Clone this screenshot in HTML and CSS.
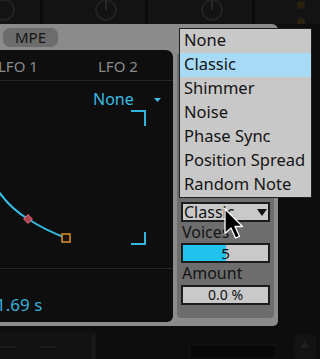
FILE: index.html
```html
<!DOCTYPE html>
<html lang="en">

<head>
    <meta charset="utf-8">
    <title>Drift - Voice Mode</title>
    <link rel="stylesheet" href="styles.css">
</head>

<body>
    <!-- strip of the device above, mostly out of view -->
    <div class="top-strip">
        <svg width="320" height="24" viewBox="0 0 320 24">
            <rect x="40" y="0" width="3" height="24" fill="#0a0a0a"/>
            <rect x="145" y="0" width="3" height="24" fill="#0a0a0a"/>
            <rect x="252" y="0" width="3" height="24" fill="#0a0a0a"/>
            <circle cx="4" cy="10" r="10" fill="none" stroke="#222" stroke-width="2"/>
            <circle cx="106" cy="10" r="10" fill="none" stroke="#222" stroke-width="2"/>
            <line x1="106" y1="0" x2="106" y2="10" stroke="#262626" stroke-width="2"/>
            <circle cx="212" cy="10" r="10" fill="none" stroke="#222" stroke-width="2"/>
            <line x1="212" y1="0" x2="212" y2="10" stroke="#262626" stroke-width="2"/>
            <circle cx="301" cy="5" r="4" fill="#2a2110"/>
            <circle cx="301" cy="22" r="4" fill="#2a2110"/>
        </svg>
    </div>

    <div class="device">
        <div class="device-head">
            <span class="mpe">MPE</span>
        </div>
        <div class="device-body">
            <div class="lfo-panel">
                <div class="lfo-tabs">
                    <span>LFO 1</span>
                    <span>LFO 2</span>
                </div>
                <div class="lfo-graph">
                    <svg width="193" height="187" viewBox="0 0 193 187">
                        <path d="M8 93 Q23 123 48 138 Q65 149 86 157" fill="none" stroke="#36bde4" stroke-width="2"/>
                        <rect x="45" y="135" width="6" height="6" transform="rotate(45 48 138)" fill="#a8404e" stroke="#d8606e" stroke-width="1"/>
                        <rect x="82" y="153" width="8" height="8" fill="#1a1309" stroke="#de9430" stroke-width="1.5"/>
                        <polyline points="151,30 165,30 165,45" fill="none" stroke="#2fb6df" stroke-width="2"/>
                        <polyline points="165,151 165,163 151,163" fill="none" stroke="#2fb6df" stroke-width="2"/>
                        <polygon points="174,17 181,17 177.5,21" fill="#3dbbe3"/>
                    </svg>
                    <span class="lfo-target">None</span>
                </div>
                <div class="lfo-foot">
                    <span class="rate">1.69 s</span>
                </div>
            </div>
            <div class="side">
                <div class="field select">Classic <span class="caret"></span></div>
                <div class="label">Voices</div>
                <div class="field slider">
                    <div class="fill" style="width: 50%"></div>
                    <span class="value">5</span>
                </div>
                <div class="label">Amount</div>
                <div class="field number">0.0 %</div>
            </div>
        </div>
    </div>

    <div class="bottom-strip">
        <svg width="320" height="33" viewBox="0 0 320 33">
            <rect x="0" y="6" width="96" height="27" fill="#121212"/>
            <rect x="0" y="20" width="16" height="2" fill="#1c1c1c"/>
            <rect x="40" y="20" width="16" height="2" fill="#1c1c1c"/>
            <rect x="92" y="8" width="3" height="25" fill="#1a1a1a"/>
            <rect x="190" y="19" width="86" height="14" fill="#070707" stroke="#161616" stroke-width="1"/>
            <rect x="294" y="8" width="22" height="25" rx="4" fill="#131313"/>
            <polygon points="305,14 300,22 310,22" fill="#1e1e1e"/>
        </svg>
    </div>

    <!-- open voice mode menu -->
    <ul class="menu">
        <li>None</li>
        <li class="selected">Classic</li>
        <li>Shimmer</li>
        <li>Noise</li>
        <li>Phase Sync</li>
        <li>Position Spread</li>
        <li>Random Note</li>
    </ul>

    <svg class="cursor" width="22" height="32" viewBox="0 0 22 32">
        <path d="M1 1 L1 25.5 L7 20 L11.5 30 L15.5 28.3 L11 18.5 L18.5 18.5 Z" fill="#000" stroke="#fff" stroke-width="1.3" stroke-linejoin="round"/>
    </svg>
</body>

</html>
```

FILE: styles.css
```css
body {
    margin: 0;
    width: 320px;
    height: 359px;
    overflow: hidden;
    position: relative;
    background-color: #0d0d0d;
    font-family: "Noto Sans", sans-serif;
}

.top-strip {
    height: 24px;
    background-color: #131313;
}

.top-strip svg,
.bottom-strip svg {
    display: block;
}

.device {
    margin-left: -20px;
    width: 298px;
    height: 302px;
    box-sizing: border-box;
    padding-bottom: 4px;
    background-color: #8b8b8b;
    border-radius: 0 6px 5px 0;
}

.device-head {
    height: 26px;
    box-sizing: border-box;
    padding-top: 4px;
    padding-left: 23px;
}

.mpe {
    display: block;
    width: 55px;
    height: 19px;
    line-height: 19px;
    text-align: center;
    font-size: 15px;
    color: #161616;
    background-color: #6c6c6c;
    border-radius: 7px;
}

.device-body {
    display: flex;
    height: 272px;
}

.lfo-panel {
    width: 193px;
    display: flex;
    flex-direction: column;
    background-color: #0e0e0e;
    border-radius: 0 7px 6px 0;
}

.lfo-tabs {
    height: 31px;
    box-sizing: border-box;
    padding-top: 2px;
    padding-left: 18px;
    display: grid;
    grid-template-columns: 100px 100px;
    line-height: 29px;
    font-size: 15px;
    color: #8a8a8a;
    border-bottom: 1px solid #262626;
}

.lfo-graph {
    height: 187px;
    position: relative;
}

.lfo-graph svg {
    display: block;
}

.lfo-target {
    position: absolute;
    left: 113px;
    top: 8px;
    line-height: 20px;
    font-size: 16px;
    color: #3dbbe3;
}

.lfo-foot {
    flex: 1;
    border-top: 1px solid #262626;
    padding-top: 26px;
    padding-left: 16px;
}

.rate {
    display: block;
    line-height: 20px;
    font-size: 17px;
    color: #38b0da;
}

.side {
    flex: 1;
    margin: 4px;
    padding-top: 148px;
    padding-left: 4px;
    background-color: #6d6d6d;
    border-radius: 0 0 4px 4px;
}

.field {
    width: 89px;
    height: 20px;
    box-sizing: border-box;
    border: 2px solid #1c1c1c;
    background-color: #c9c9c9;
    color: #121212;
    line-height: 16px;
    font-size: 15px;
}

.select {
    display: flex;
    justify-content: space-between;
    align-items: center;
    padding-left: 1px;
    padding-right: 1px;
    font-size: 16px;
}

.caret {
    width: 0;
    height: 0;
    border-left: 5px solid transparent;
    border-right: 5px solid transparent;
    border-top: 7px solid #111111;
}

.label {
    height: 21px;
    line-height: 21px;
    padding-left: 1px;
    font-size: 16px;
    color: #141414;
}

.label + .field.number {
    margin-top: 1px;
}

.slider {
    position: relative;
    text-align: center;
}

.slider .fill {
    position: absolute;
    left: 0;
    top: 0;
    bottom: 0;
    background-color: #20c2ee;
}

.slider .value {
    position: relative;
}

.number {
    text-align: center;
    font-size: 14px;
}

.bottom-strip {
    height: 33px;
}

.menu {
    position: absolute;
    left: 179px;
    top: 28px;
    width: 133px;
    box-sizing: border-box;
    margin: 0;
    padding: 0;
    list-style: none;
    border: 1px solid #202020;
    background-color: #c8c8c8;
}

.menu li {
    height: 24px;
    line-height: 22px;
    padding-left: 4px;
    font-size: 16.5px;
    color: #141414;
    white-space: nowrap;
}

.menu li.selected {
    background-color: #a7dbf5;
}

.cursor {
    position: absolute;
    left: 224px;
    top: 208px;
}
```
